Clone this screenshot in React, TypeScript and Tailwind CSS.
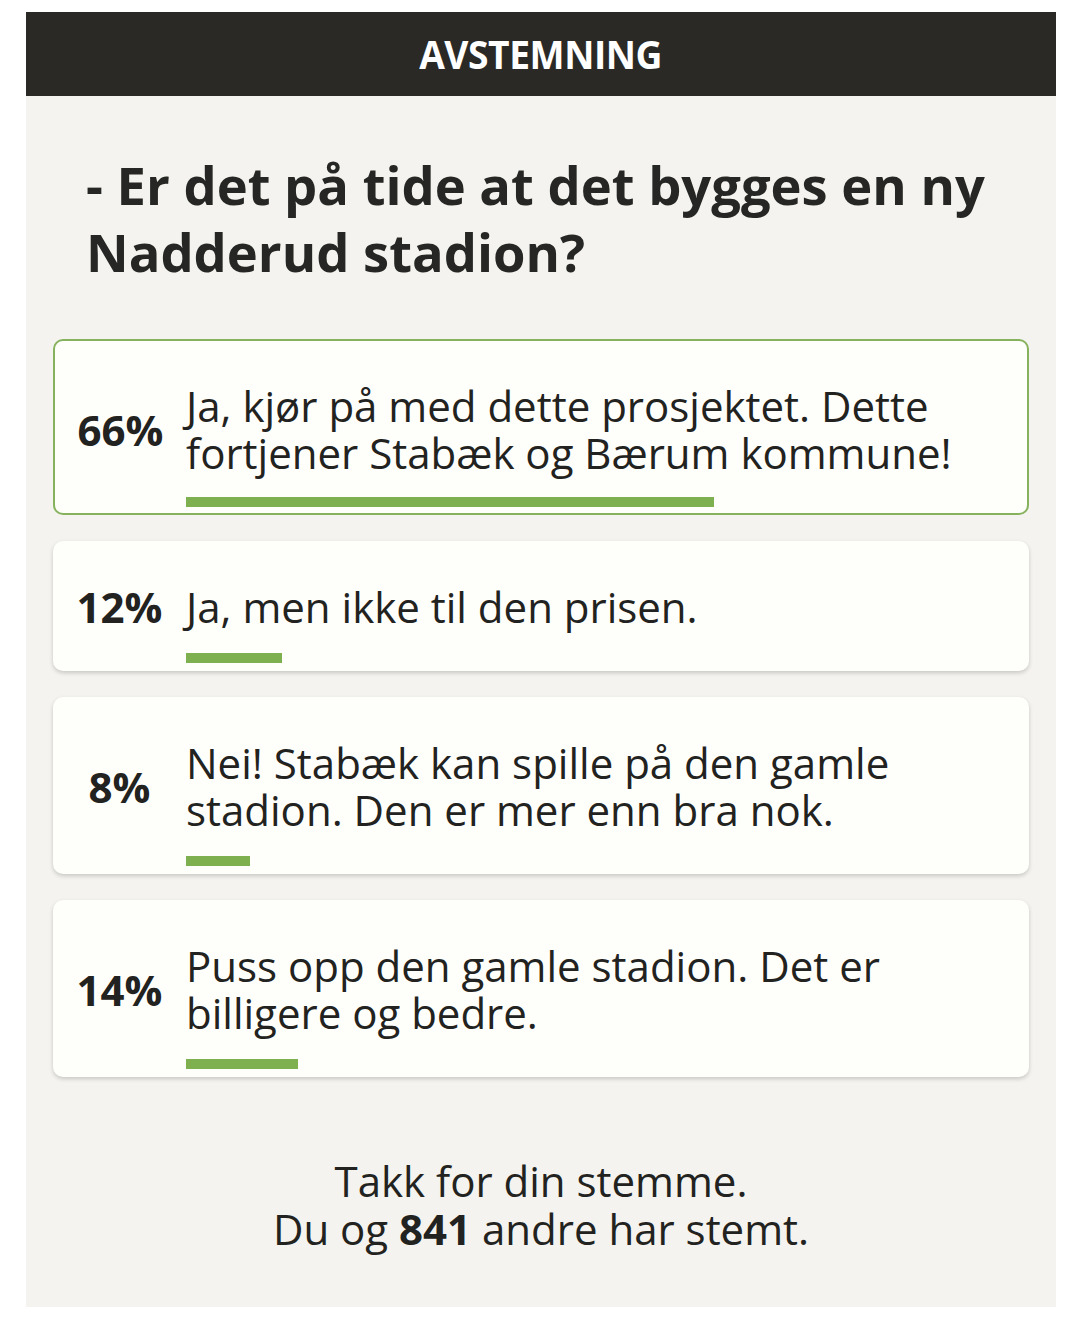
import React from 'react';

const answers = [
  { pct: 66, text: 'Ja, kjør på med dette prosjektet. Dette fortjener Stabæk og Bærum kommune!', voted: true },
  { pct: 12, text: 'Ja, men ikke til den prisen.', voted: false },
  { pct: 8, text: 'Nei! Stabæk kan spille på den gamle stadion. Den er mer enn bra nok.', voted: false },
  { pct: 14, text: 'Puss opp den gamle stadion. Det er billigere og bedre.', voted: false },
];

const PollOption: React.FC<{ pct: number; text: string; voted: boolean }> = ({ pct, text, voted }) => {
  return (
    <div
      className={
        voted
          ? 'bg-[#fefefb] rounded-[10px] border-2 border-[#86b25e] pt-[41px] pb-[6px]'
          : 'bg-[#fefefb] rounded-[10px] shadow-[0_2px_4px_rgba(0,0,0,0.18)] pt-[42px] pb-[8px]'
      }
    >
      <div className="flex items-center">
        <div className={voted ? 'w-[131px] shrink-0 text-center' : 'w-[133px] shrink-0 text-center'}>
          <span className="text-[42px] leading-[47px] font-bold text-[#222220]">{pct}%</span>
        </div>
        <p className="text-[42px] leading-[47px] text-[#222220] pr-[40px]">{text}</p>
      </div>
      <div className={voted ? 'ml-[131px] mt-[21px] w-[800px]' : 'ml-[133px] mt-[23px] w-[800px]'}>
        <div className="h-[10px] bg-[#7fb04f]" style={{ width: `${pct}%` }} />
      </div>
    </div>
  );
};

export default function App() {
  return (
    <div className="min-h-[1329px] bg-white pt-[12px]" style={{ fontFamily: '"Open Sans", sans-serif' }}>
      <div className="ml-[26px] w-[1030px]">
        <div className="h-[84px] bg-[#2a2925] flex items-center justify-center">
          <h2 className="text-white text-[40px] leading-[48px] font-bold tracking-[-0.5px] scale-x-[0.93]">AVSTEMNING</h2>
        </div>
        <div className="bg-[#f4f3ef] px-[27px] pt-[55px] pb-[54px]">
          <h1 className="pl-[33px] pr-[20px] text-[52.5px] leading-[67px] font-bold text-[#262624]">
            - Er det på tide at det bygges en ny Nadderud stadion?
          </h1>
          <div className="mt-[54px] flex flex-col gap-[26px]">
            {answers.map((a) => (
              <PollOption key={a.pct} pct={a.pct} text={a.text} voted={a.voted} />
            ))}
          </div>
          <div className="mt-[80px] text-center text-[42px] leading-[48px] text-[#222220]">
            <p>Takk for din stemme.</p>
            <p>
              Du og <span className="font-bold">841</span> andre har stemt.
            </p>
          </div>
        </div>
      </div>
    </div>
  );
}
